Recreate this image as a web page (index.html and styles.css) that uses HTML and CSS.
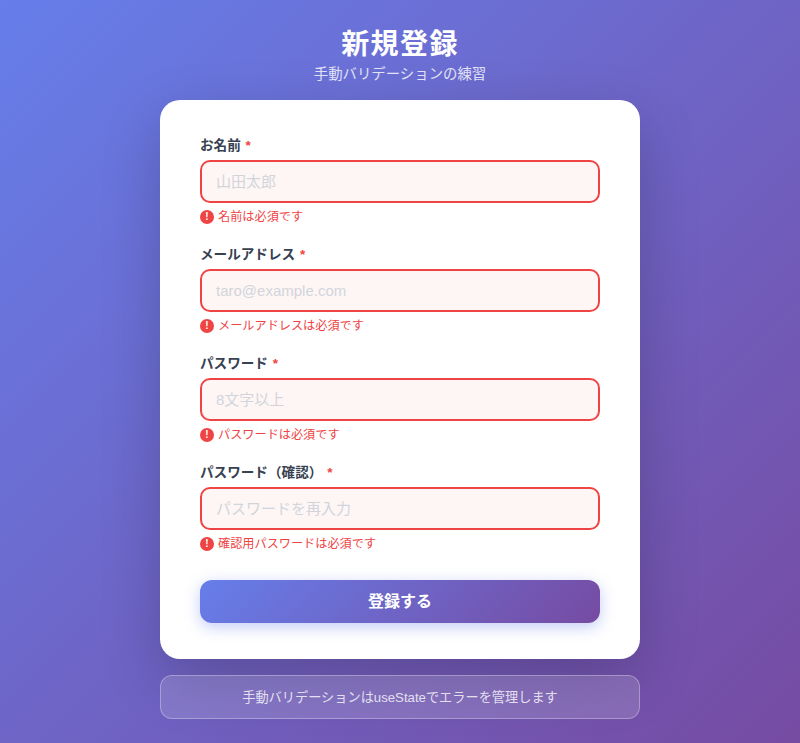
FILE: index.html
```html
<!DOCTYPE html>
<html>
<head>
    <meta name="viewport" content="width=device-width, initial-scale=1">
    <title>新規登録</title>
    <link rel="stylesheet" href="styles.css">
</head>
<body>

    <div class="page">
        <div class="header">
            <h1>新規登録</h1>
            <p>手動バリデーションの練習</p>
        </div>

        <form class="card">
            <div class="field">
                <label for="name">お名前 <span class="required">*</span></label>
                <input type="text" id="name" placeholder="山田太郎">
                <div class="error">
                    <span class="errorIcon">!</span>
                    <span>名前は必須です</span>
                </div>
            </div>

            <div class="field">
                <label for="email">メールアドレス <span class="required">*</span></label>
                <input type="text" id="email" placeholder="taro@example.com">
                <div class="error">
                    <span class="errorIcon">!</span>
                    <span>メールアドレスは必須です</span>
                </div>
            </div>

            <div class="field">
                <label for="psw">パスワード <span class="required">*</span></label>
                <input type="password" id="psw" placeholder="8文字以上">
                <div class="error">
                    <span class="errorIcon">!</span>
                    <span>パスワードは必須です</span>
                </div>
            </div>

            <div class="field">
                <label for="repsw">パスワード（確認） <span class="required">*</span></label>
                <input type="password" id="repsw" placeholder="パスワードを再入力">
                <div class="error">
                    <span class="errorIcon">!</span>
                    <span>確認用パスワードは必須です</span>
                </div>
            </div>

            <button type="button" class="submitbtn">登録する</button>
        </form>

        <div class="note">手動バリデーションはuseStateでエラーを管理します</div>
    </div>

</body>
</html>
```

FILE: styles.css
```css
* {
    box-sizing: border-box;
}

body {
    margin: 0;
    min-height: 743px;
    background: linear-gradient(135deg, #667eea 0%, #764ba2 100%);
    font-family: "Liberation Sans", "Noto Sans CJK JP", sans-serif;
    color: #374151;
}

.page {
    width: 480px;
    margin: 0 auto;
    padding-top: 26px;
}

.header {
    height: 74px;
    text-align: center;
    color: white;
}

h1 {
    margin: 0;
    font-size: 28px;
    line-height: 38px;
    font-weight: 600;
    letter-spacing: 1.4px;
}

.header p {
    margin: 0;
    font-size: 14.4px;
    line-height: 20px;
    opacity: 0.8;
}

.card {
    background-color: white;
    border-radius: 20px;
    padding: 36px 40px;
    box-shadow: 0 20px 60px rgba(0, 0, 0, 0.2);
}

.field {
    margin-bottom: 20px;
}

label {
    display: block;
    height: 18px;
    margin-bottom: 6px;
    font-size: 13.6px;
    line-height: 20px;
    font-weight: 600;
}

.required {
    color: #ef4444;
    margin-left: 1px;
}

input[type=text], input[type=password] {
    display: block;
    width: 100%;
    height: 43px;
    padding: 12px 14px;
    border: 2px solid #ef4444;
    border-radius: 10px;
    background-color: #fef5f5;
    font-family: inherit;
    font-size: 15px;
}

input::placeholder {
    color: #d1d5db;
}

.error {
    display: flex;
    align-items: center;
    gap: 4px;
    height: 16px;
    margin-top: 6px;
    font-size: 12.16px;
    line-height: 16px;
    color: #ef4444;
}

.errorIcon {
    width: 14px;
    height: 14px;
    border-radius: 50%;
    background-color: #ef4444;
    color: white;
    font-size: 10px;
    font-weight: 700;
    line-height: 14px;
    text-align: center;
}

.submitbtn {
    display: block;
    width: 100%;
    height: 43px;
    margin-top: 28px;
    padding: 0 0 4px 0;
    border: none;
    border-radius: 12px;
    background: linear-gradient(135deg, #667eea 0%, #764ba2 100%);
    box-shadow: 0 4px 15px rgba(102, 126, 234, 0.4);
    color: white;
    font-family: inherit;
    font-size: 16px;
    font-weight: 600;
}

.note {
    height: 44px;
    margin-top: 16px;
    border: 1px solid rgba(255, 255, 255, 0.3);
    border-radius: 12px;
    background-color: rgba(255, 255, 255, 0.15);
    color: rgba(255, 255, 255, 0.8);
    font-size: 13.2px;
    line-height: 43px;
    text-align: center;
}
```
